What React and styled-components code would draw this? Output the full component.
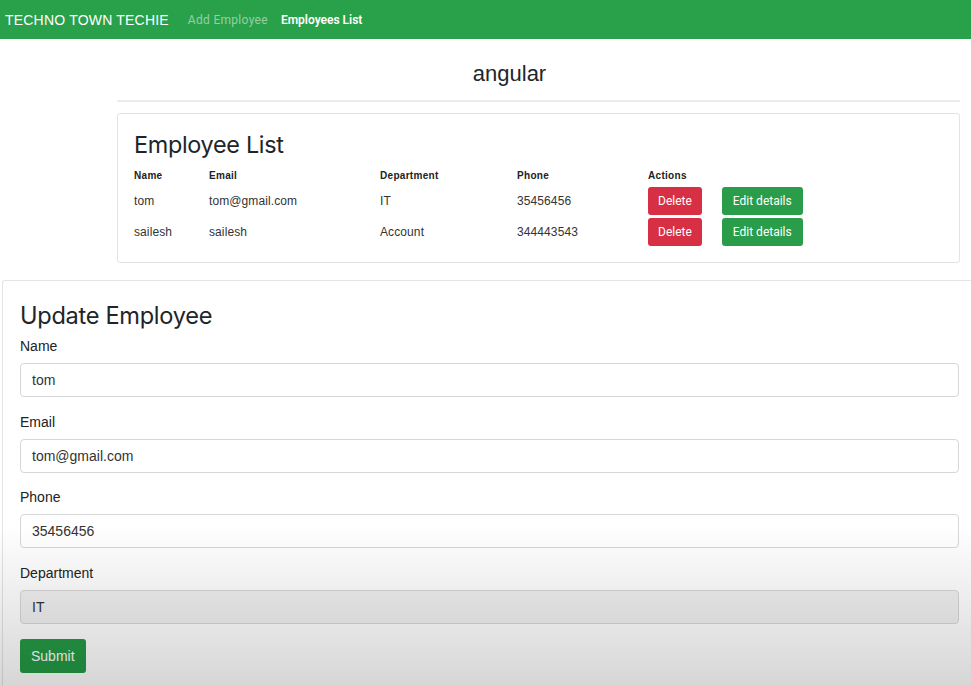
import styled, { createGlobalStyle } from "styled-components";

const GlobalStyle = createGlobalStyle`
  html, body {
    margin: 0;
    padding: 0;
    background: #fff;
    font-family: "Liberation Sans", Arial, sans-serif;
    color: #212529;
  }
  body::after {
    content: "";
    position: fixed;
    left: 0;
    right: 0;
    bottom: 0;
    height: 160px;
    pointer-events: none;
    background: linear-gradient(to bottom, rgba(0, 0, 0, 0), rgba(0, 0, 0, 0.16));
  }
`;

const employees = [
  { name: "tom", email: "tom@gmail.com", department: "IT", phone: "35456456" },
  { name: "sailesh", email: "sailesh", department: "Account", phone: "344443543" },
];

const Nav = styled.nav`
  height: 39px;
  background: #29a04a;
  display: flex;
  align-items: center;
  padding: 0 5px;
`;

const Brand = styled.span`
  color: #fff;
  font-size: 14px;
  letter-spacing: 0.2px;
  margin-right: 19px;
`;

const NavLink = styled.a`
  color: ${(p) => (p.$active ? "#fff" : "rgba(255,255,255,0.5)")};
  font-weight: ${(p) => (p.$active ? 600 : 400)};
  font-size: 12px;
  letter-spacing: ${(p) => (p.$active ? "0" : "0.3px")};
  margin-right: 13px;
  font-family: "Roboto", "Liberation Sans", sans-serif;
`;

const Container = styled.div`
  margin-left: 117px;
  width: 843px;
`;

const AppTitle = styled.h2`
  margin: 0;
  padding: 20px 58px 0 0;
  text-align: center;
  font-weight: 400;
  font-size: 22px;
  line-height: 30px;
`;

const Rule = styled.hr`
  margin: 11px 0 11px;
  border: 0;
  border-top: 2px solid #ececec;
`;

const Card = styled.div`
  border: 1px solid #e3e3e3;
  border-radius: 3px;
  background: #fff;
  padding: 16px 16px 13px;
`;

const CardTitle = styled.h3`
  margin: 0 0 8px;
  font-family: "Inter", "Liberation Sans", sans-serif;
  font-weight: 400;
  font-size: 23.4px;
  line-height: 29px;
  letter-spacing: -0.3px;
`;

const Row = styled.div`
  display: grid;
  grid-template-columns: 75px 171px 137px 131px auto;
  align-items: center;
  height: ${(p) => (p.$head ? "16px" : "28px")};
  margin-bottom: ${(p) => (p.$head ? "4px" : "3px")};
  font-size: ${(p) => (p.$head ? "10px" : "12px")};
  font-weight: ${(p) => (p.$head ? 700 : 400)};
  color: ${(p) => (p.$head ? "#222" : "#333")};
  letter-spacing: ${(p) => (p.$head ? "0.3px" : "0.1px")};
`;

const Actions = styled.div`
  display: flex;
  gap: 20px;
`;

const Btn = styled.button`
  height: 28px;
  border: 0;
  border-radius: 3px;
  color: #fff;
  font-size: 12px;
  font-family: "Roboto", "Liberation Sans", sans-serif;
  padding: 0 ${(p) => (p.$wide ? "11px" : "10px")};
  background: ${(p) => (p.$variant === "danger" ? "#d72f43" : "#2a9d4a")};
`;

const FormCard = styled.div`
  margin: 17px 0 0 2px;
  border: 1px solid #e4e4e4;
  border-right: 0;
  border-radius: 3px 0 0 0;
  padding: 20px 12px 16px 17px;
`;

const FormTitle = styled.h3`
  margin: 0 0 6px;
  font-family: "Inter", "Liberation Sans", sans-serif;
  font-weight: 400;
  font-size: 23.6px;
  line-height: 29px;
  letter-spacing: -0.3px;
`;

const Field = styled.div`
  margin-bottom: 14.7px;
`;

const Label = styled.label`
  display: block;
  font-size: 14px;
  line-height: 21px;
  margin-bottom: 6px;
  color: #222;
`;

const Input = styled.input`
  display: block;
  width: 100%;
  height: 34px;
  box-sizing: border-box;
  border: 1px solid #d7d7d7;
  border-radius: 4px;
  padding: 0 11px;
  font-size: 14px;
  font-family: "Liberation Sans", Arial, sans-serif;
  color: #333;
  background: ${(p) => (p.readOnly ? "#f0f0f0" : "#fff")};
  outline: none;
`;

const Submit = styled.button`
  height: 34px;
  padding: 0 11px;
  border: 0;
  border-radius: 3px;
  background: #259a45;
  color: #fff;
  font-size: 14px;
  font-family: "Liberation Sans", Arial, sans-serif;
`;

export default function App() {
  const selected = employees[0];
  return (
    <>
      <GlobalStyle />
      <Nav>
        <Brand>TECHNO TOWN TECHIE</Brand>
        <NavLink>Add Employee</NavLink>
        <NavLink $active>Employees List</NavLink>
      </Nav>
      <Container>
        <AppTitle>angular</AppTitle>
        <Rule />
        <Card>
          <CardTitle>Employee List</CardTitle>
          <Row $head>
            <span>Name</span>
            <span>Email</span>
            <span>Department</span>
            <span>Phone</span>
            <span>Actions</span>
          </Row>
          {employees.map((e) => (
            <Row key={e.name}>
              <span>{e.name}</span>
              <span>{e.email}</span>
              <span>{e.department}</span>
              <span>{e.phone}</span>
              <Actions>
                <Btn $variant="danger">Delete</Btn>
                <Btn $wide>Edit details</Btn>
              </Actions>
            </Row>
          ))}
        </Card>
      </Container>
      <FormCard>
        <FormTitle>Update Employee</FormTitle>
        <Field>
          <Label>Name</Label>
          <Input defaultValue={selected.name} />
        </Field>
        <Field>
          <Label>Email</Label>
          <Input defaultValue={selected.email} />
        </Field>
        <Field>
          <Label>Phone</Label>
          <Input defaultValue={selected.phone} />
        </Field>
        <Field>
          <Label>Department</Label>
          <Input readOnly defaultValue={selected.department} />
        </Field>
        <Submit>Submit</Submit>
      </FormCard>
    </>
  );
}
